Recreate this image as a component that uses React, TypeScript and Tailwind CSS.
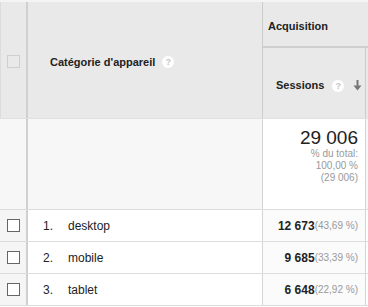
import React from "react";

type Row = { n: number; name: string; value: string; pct: string };

const rows: Row[] = [
  { n: 1, name: "desktop", value: "12 673", pct: "(43,69 %)" },
  { n: 2, name: "mobile", value: "9 685", pct: "(33,39 %)" },
  { n: 3, name: "tablet", value: "6 648", pct: "(22,92 %)" },
];

const HelpIcon = () => (
  <span className="inline-flex h-[12px] w-[12px] items-center justify-center rounded-full bg-white text-[9px] font-bold leading-none text-[#c4c4c4]">
    ?
  </span>
);

const SortArrow = () => (
  <svg width="9" height="11" viewBox="0 0 9 11">
    <path d="M4.5 0v8" stroke="#777" strokeWidth="2" />
    <path d="M0.5 5.5L4.5 10.5L8.5 5.5Z" fill="#777" />
  </svg>
);

const App: React.FC = () => {
  return (
    <div
      className="h-[307px] w-[368px] overflow-hidden bg-white text-[#222]"
      style={{ fontFamily: '"Liberation Sans", Arial, sans-serif' }}
    >
      <div className="h-[2px] bg-[#f4f4f4]" />
      {/* header */}
      <div className="flex h-[116px] border-l border-[#dcdcdc] bg-[#e9e9e9]">
        <div className="flex w-[27px] items-center justify-center border-r-2 border-[#d0d0d0]">
          <span className="mt-[2px] h-[13px] w-[13px] border border-[#cfcfcf] bg-[#e9e9e9]" />
        </div>
        <div className="flex flex-1 items-center gap-[7px] pl-[22px] pt-[4px] text-[11px] font-bold">
          Catégorie d'appareil
          <HelpIcon />
        </div>
        <div className="flex w-[106px] flex-col border-l border-[#cccccc]">
          <div className="flex h-[46px] items-center border-b-2 border-[#cfcfcf] pl-[5px] pt-[4px] text-[11px] font-bold">
            Acquisition
          </div>
          <div className="flex flex-1">
            <div className="flex w-[102px] items-center pl-[13px] pt-[4px] text-[11px] font-bold">
              Sessions
              <span className="ml-[8px]">
                <HelpIcon />
              </span>
              <span className="ml-[9px]">
                <SortArrow />
              </span>
            </div>
            <div className="flex-1 border-l border-[#cccccc]" />
          </div>
        </div>
      </div>
      {/* total */}
      <div className="flex h-[92px] border-b border-t border-[#dcdcdc] border-t-[#e0e0e0]">
        <div className="w-[28px] shrink-0 border-r-2 border-[#d0d0d0] bg-[#f7f7f7]" />
        <div className="flex-1 bg-[#f7f7f7]" />
        <div className="flex w-[104px] shrink-0 flex-col items-end border-l border-r border-[#d4d4d4] bg-white pr-[7px] pt-[9px]">
          <div className="text-[19px] leading-[20px] text-[#222]">29 006</div>
          <div className="text-right text-[10px] leading-[12px] text-[#999]">
            % du total:
            <br />
            100,00 %
            <br />
            (29 006)
          </div>
        </div>
        <div className="w-[2px] shrink-0 bg-[#f7f7f7]" />
      </div>
      {/* rows */}
      {rows.map((r) => (
        <div key={r.n} className="flex h-[32px] border-b border-[#dcdcdc]">
          <div className="flex w-[28px] shrink-0 items-center justify-center border-r-2 border-[#d0d0d0] bg-[#f5f5f5]">
            <span className="h-[13px] w-[13px] border border-[#666] bg-white" />
          </div>
          <div className="flex flex-1 items-center bg-white text-[12px]">
            <span className="box-content w-[24px] pl-[15px]">{r.n}.</span>
            <span className="pl-[1px]">{r.name}</span>
          </div>
          <div className="flex w-[104px] shrink-0 items-center justify-end border-l border-r border-[#d4d4d4] bg-[#fbfbfb] pr-[7px]">
            <span className="text-[12px] font-bold">{r.value}</span>
            <span className="text-[10px] text-[#999]">{r.pct}</span>
          </div>
          <div className="w-[2px] shrink-0 bg-white" />
        </div>
      ))}
    </div>
  );
};

export default App;
